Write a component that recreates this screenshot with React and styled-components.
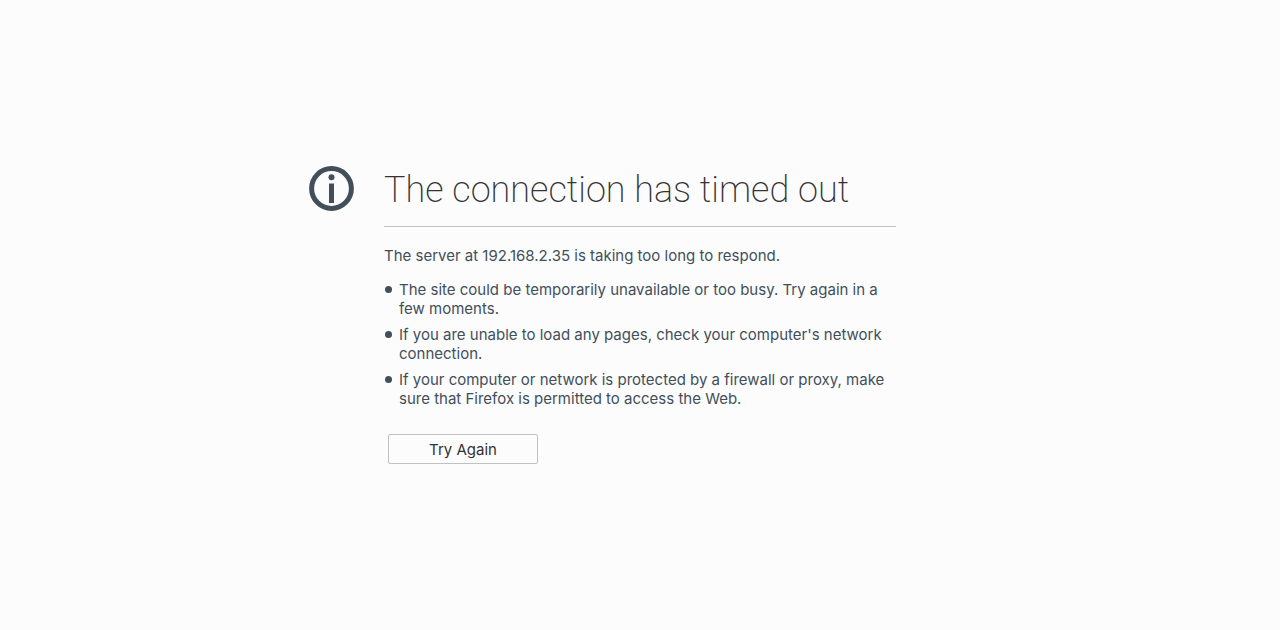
import React from "react";
import styled, { createGlobalStyle } from "styled-components";

const GlobalStyle = createGlobalStyle`
  * { box-sizing: border-box; }
  body {
    margin: 0;
    background: #fcfcfc;
    color: #424f5a;
    font-family: Inter, "Liberation Sans", sans-serif;
    font-size: 15px;
    line-height: 19px;
  }
`;

const Page = styled.main`
  display: grid;
  grid-template-columns: 1fr minmax(0, 512px) 1fr;
  align-content: center;
  min-height: 100vh;
  padding: 24px 0;
`;

const InfoIcon = styled.svg`
  justify-self: end;
  width: 45px;
  height: 45px;
  margin-right: 30px;
`;

const Title = styled.h1`
  margin: 0 0 19px;
  padding-bottom: 12px;
  border-bottom: 1px solid #c1c1c1;
  color: #333;
  font-family: Roboto, Inter, sans-serif;
  font-size: 36px;
  font-weight: 200;
  line-height: 48px;
`;

const Summary = styled.p`
  margin: 0 0 15px;
`;

const Reasons = styled.ul`
  display: flex;
  flex-direction: column;
  gap: 7px;
  margin: 0 0 26px;
  padding: 0;
  list-style: none;
`;

const Reason = styled.li`
  display: flex;
  gap: 7px;

  &::before {
    content: "";
    flex: none;
    width: 7px;
    height: 7px;
    margin: 6px 0 0 1px;
    border-radius: 50%;
    background: #424f5a;
  }
`;

const RetryButton = styled.button`
  width: 150px;
  height: 30px;
  margin: 0 4px;
  padding: 1px 0 0;
  border: 1px solid #c1c1c1;
  border-radius: 2px;
  background: #fcfcfc;
  color: #333;
  font: inherit;
`;

const reasons = [
  "The site could be temporarily unavailable or too busy. Try again in a few moments.",
  "If you are unable to load any pages, check your computer's network connection.",
  "If your computer or network is protected by a firewall or proxy, make sure that Firefox is permitted to access the Web.",
];

export default function App() {
  return (
    <>
      <GlobalStyle />
      <Page>
        <InfoIcon viewBox="0 0 45 45" aria-hidden="true">
          <circle cx="22.5" cy="22.5" r="19.9" fill="none" stroke="#424f5a" strokeWidth="5" />
          <circle cx="22.5" cy="11.2" r="3" fill="#424f5a" />
          <rect x="20" y="17.5" width="5" height="19.5" fill="#424f5a" />
        </InfoIcon>
        <div>
          <Title>The connection has timed out</Title>
          <Summary>The server at 192.168.2.35 is taking too long to respond.</Summary>
          <Reasons>
            {reasons.map((text) => (
              <Reason key={text}>{text}</Reason>
            ))}
          </Reasons>
          <RetryButton type="button">Try Again</RetryButton>
        </div>
      </Page>
    </>
  );
}
